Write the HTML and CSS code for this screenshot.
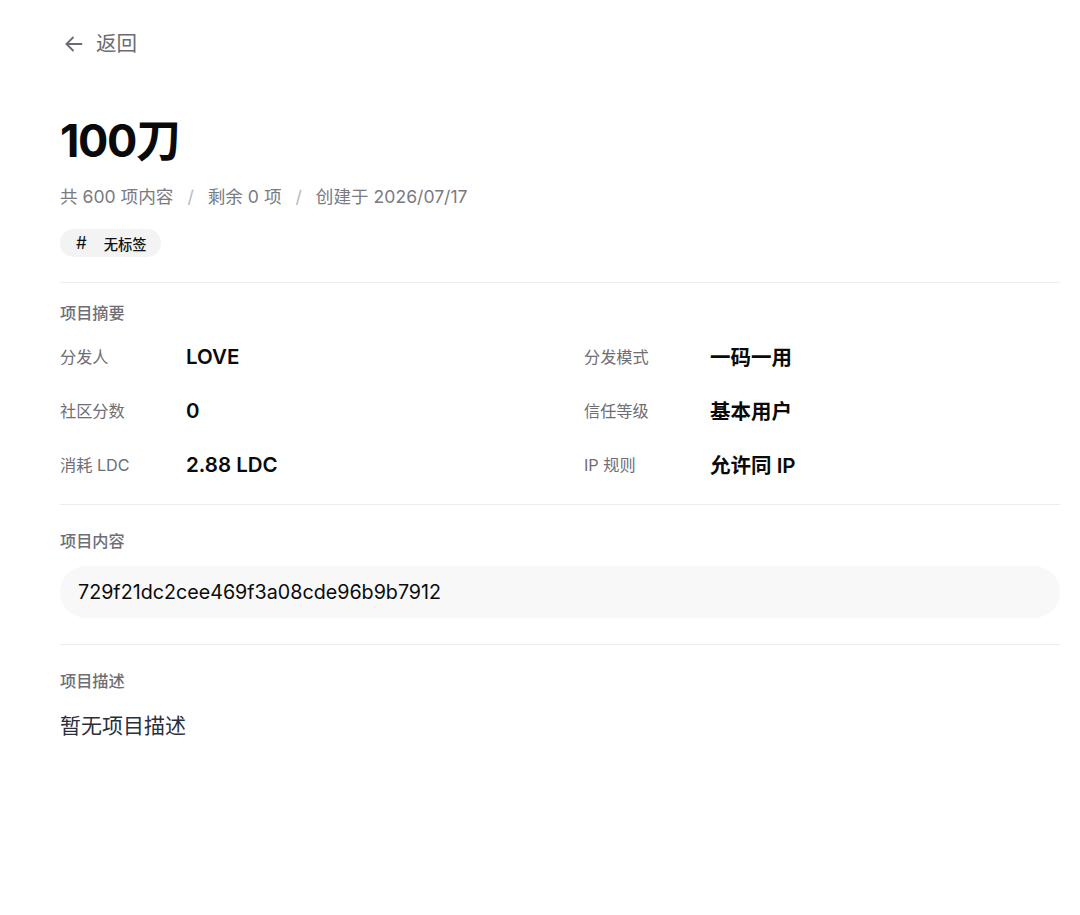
FILE: index.html
```html
<!DOCTYPE html>
<html lang="zh-CN">
<head>
<meta charset="utf-8">
<title>100刀</title>
<link rel="stylesheet" href="styles.css">
</head>
<body>
<main class="page">
  <a class="back" href="#">
    <svg class="back-icon" viewBox="0 0 18 18" width="18" height="18" fill="none" stroke="currentColor" stroke-width="1.8" stroke-linecap="round" stroke-linejoin="round"><path d="M16.5 9H1.5"/><path d="M8 2.5L1.5 9L8 15.5"/></svg>
    <span>返回</span>
  </a>

  <header class="head">
    <h1 class="title">100刀</h1>
    <div class="meta">
      <span>共 600 项内容</span>
      <span class="sep">/</span>
      <span>剩余 0 项</span>
      <span class="sep">/</span>
      <span>创建于 2026/07/17</span>
    </div>
    <div class="tags">
      <span class="tag"><span class="tag-hash">#</span>无标签</span>
    </div>
  </header>

  <section class="section section-summary">
    <h2 class="section-title">项目摘要</h2>
    <div class="summary">
      <div class="row"><span class="label">分发人</span><span class="value">LOVE</span></div>
      <div class="row"><span class="label">分发模式</span><span class="value">一码一用</span></div>
      <div class="row"><span class="label">社区分数</span><span class="value">0</span></div>
      <div class="row"><span class="label">信任等级</span><span class="value">基本用户</span></div>
      <div class="row"><span class="label">消耗 LDC</span><span class="value">2.88 LDC</span></div>
      <div class="row"><span class="label">IP 规则</span><span class="value">允许同 IP</span></div>
    </div>
  </section>

  <section class="section">
    <h2 class="section-title">项目内容</h2>
    <div class="content-box">729f21dc2cee469f3a08cde96b9b7912</div>
  </section>

  <section class="section">
    <h2 class="section-title">项目描述</h2>
    <p class="desc">暂无项目描述</p>
  </section>
</main>
</body>
</html>
```

FILE: styles.css
```css
* { box-sizing: border-box; }

html, body {
  margin: 0;
  padding: 0;
  background: #ffffff;
}

body {
  font-family: Inter, "Noto Sans CJK SC", sans-serif;
  color: #0a0a0a;
}

.page {
  width: 1000px;
  margin-left: 60px;
  padding-top: 32px;
}

/* back link */
.back {
  display: inline-flex;
  align-items: center;
  gap: 13px;
  color: #6b6b74;
  text-decoration: none;
  font-size: 20.5px;
  line-height: 24px;
  margin-left: 5px;
}

.back-icon { display: block; }

/* page header */
.head {
  padding-top: 57px;
  padding-bottom: 25px;
  border-bottom: 1px solid #ececec;
}

.title {
  margin: 0;
  font-size: 45px;
  line-height: 54px;
  font-weight: 700;
  letter-spacing: -0.03em;
}

.meta {
  margin-top: 18px;
  display: flex;
  gap: 14px;
  font-size: 17.6px;
  line-height: 22px;
  color: #7a7a80;
}

.sep { color: #b8b8bc; }

.tags {
  margin-top: 21px;
  display: flex;
}

.tag {
  display: inline-flex;
  align-items: center;
  height: 28px;
  padding: 0 14px 0 16px;
  border-radius: 14px;
  background: #f3f3f3;
  font-size: 14.3px;
  font-weight: 500;
  color: #111;
}

.tag-hash {
  font-size: 17px;
  font-weight: 400;
  margin-right: 17px;
}

/* sections */
.section {
  padding-top: 26px;
  padding-bottom: 26px;
  border-bottom: 1px solid #ececec;
}

.section-summary {
  padding-top: 20px;
  padding-bottom: 13px;
}

.section:last-child { border-bottom: none; }

.section-title {
  margin: 0;
  font-size: 16.2px;
  line-height: 20px;
  font-weight: 500;
  color: #6e6e74;
}

.summary {
  margin-top: 6px;
  display: grid;
  grid-template-columns: 1fr 1fr;
  column-gap: 48px;
}

.row {
  display: flex;
  align-items: center;
  height: 54px;
}

.label {
  width: 126px;
  flex: none;
  font-size: 16.2px;
  color: #6e6e74;
}

.value {
  font-size: 20.5px;
  font-weight: 600;
  color: #0a0a0a;
}

.content-box {
  margin-top: 15px;
  height: 52px;
  display: flex;
  align-items: center;
  padding: 0 18px;
  border-radius: 26px;
  background: #f8f8f8;
  font-size: 19.7px;
  color: #0a0a0a;
}

.desc {
  margin: 20px 0 0;
  font-size: 21px;
  line-height: 30px;
  color: #2a2f3a;
}
```
